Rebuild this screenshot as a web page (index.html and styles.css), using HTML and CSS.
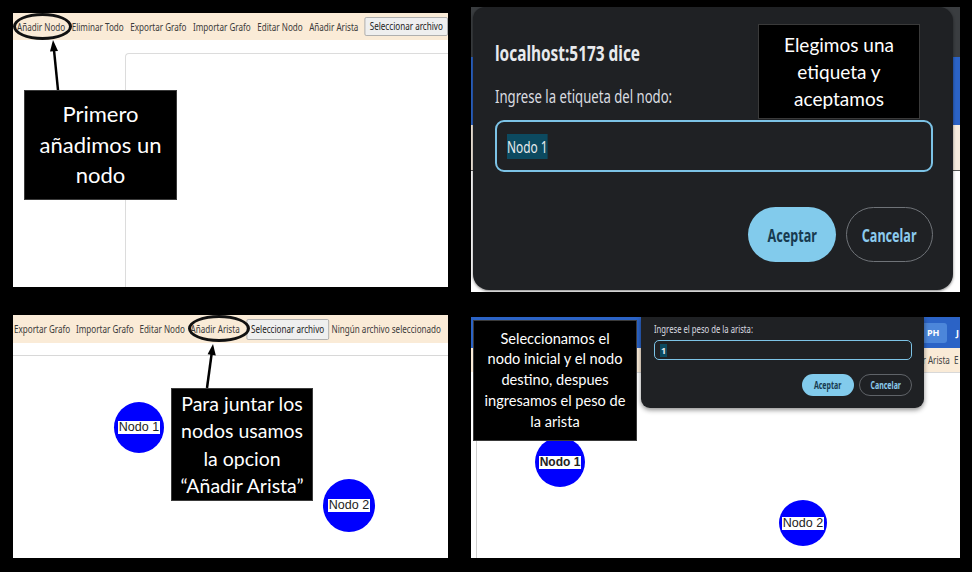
FILE: index.html
```html
<!DOCTYPE html>
<html lang="es">
<head>
<meta charset="utf-8">
<title>Tutorial grafo</title>
<link rel="stylesheet" href="styles.css">
</head>
<body>
<main class="board">

  <section class="panel p1">
    <div class="toolbar tb1">
      <div class="tb-inner">
        <span>Añadir Nodo</span>
        <span>Eliminar Todo</span>
        <span>Exportar Grafo</span>
        <span>Importar Grafo</span>
        <span>Editar Nodo</span>
        <span>Añadir Arista</span>
        <span class="filebtn">Seleccionar archivo</span>
      </div>
    </div>
    <div class="workspace"><div class="canvas-box"></div></div>
    <div class="ring ring1"></div>
    <svg class="arrow" viewBox="0 0 435 274" width="435" height="274">
      <line x1="45" y1="77" x2="41" y2="37" stroke="#000" stroke-width="2.5"/>
      <polygon points="40,27 45,38 37,38.6" fill="#000"/>
    </svg>
    <div class="note note1">Primero<br>añadimos un<br>nodo</div>
  </section>

  <section class="panel p2">
    <div class="dialog big">
      <div class="d-title"><span class="sx">localhost:5173 dice</span></div>
      <div class="d-label"><span class="sx sxl">Ingrese la etiqueta del nodo:</span></div>
      <div class="d-input"><span class="sx"><span class="sel">Nodo 1</span></span></div>
      <div class="d-actions">
        <span class="btn ok"><span class="sxc">Aceptar</span></span>
        <span class="btn cancel"><span class="sxc">Cancelar</span></span>
      </div>
    </div>
    <div class="note note2">Elegimos una<br>etiqueta y<br>aceptamos</div>
  </section>

  <section class="panel p3">
    <div class="toolbar tb3">
      <div class="tb-inner">
        <span>Exportar Grafo</span>
        <span>Importar Grafo</span>
        <span>Editar Nodo</span>
        <span>Añadir Arista</span>
        <span class="filebtn">Seleccionar archivo</span>
        <span class="nofile">Ningún archivo seleccionado</span>
      </div>
    </div>
    <div class="canvas3"></div>
    <div class="node n31"><span class="lbl">Nodo 1</span></div>
    <div class="node n32"><span class="lbl">Nodo 2</span></div>
    <div class="ring ring3"></div>
    <svg class="arrow" viewBox="0 0 435 243" width="435" height="243">
      <line x1="194" y1="73" x2="198.6" y2="39" stroke="#000" stroke-width="2.5"/>
      <polygon points="200,29 202.8,40.5 194.6,39.3" fill="#000"/>
    </svg>
    <div class="note note3">Para juntar los<br>nodos usamos<br>la opcion<br>“Añadir Arista”</div>
  </section>

  <section class="panel p4">
    <div class="p4-header">
      <span class="ph-btn">PH</span>
      <span class="hdr-j">J</span>
    </div>
    <div class="p4-toolbar">
      <span class="sx4">r Arista&nbsp;&nbsp;E</span>
    </div>
    <div class="canvas4"></div>
    <div class="node n41"><span class="lbl bold">Nodo 1</span></div>
    <div class="node n42"><span class="lbl">Nodo 2</span></div>
    <div class="dialog small">
      <div class="s-label"><span class="sx sxs">Ingrese el peso de la arista:</span></div>
      <div class="s-input"><span class="sel">1</span></div>
      <div class="s-actions">
        <span class="sbtn ok"><span class="sxc">Aceptar</span></span>
        <span class="sbtn cancel"><span class="sxc">Cancelar</span></span>
      </div>
    </div>
    <div class="note note4">Seleccionamos el<br>nodo inicial y el nodo<br>destino, despues<br>ingresamos el peso de<br>la arista</div>
  </section>

</main>
</body>
</html>
```

FILE: styles.css
```css
* { box-sizing: border-box; }
html, body { margin: 0; padding: 0; background: #000; }
body { width: 972px; height: 572px; overflow: hidden; }

.board {
  display: grid;
  grid-template-columns: 435px 489px;
  grid-template-rows: 285px 243px;
  column-gap: 23px;
  row-gap: 23px;
  padding: 7px 12px 0 13px;
}

.panel { position: relative; overflow: hidden; background: #fff; }

/* ---------- panel 1 ---------- */
.p1 { margin-top: 6px; height: 274px; display: flex; flex-direction: column; }

.toolbar {
  background: #faebd7;
  display: flex;
  align-items: center;
  flex: none;
  font-family: "Noto Sans", sans-serif;
  font-size: 10px;
  color: #3a3a3a;
}
.tb1 { height: 27px; padding-left: 4px; }
.tb3 { height: 28px; padding-left: 1px; }
.tb-inner {
  display: flex;
  align-items: center;
  gap: 8px;
  white-space: nowrap;
  transform: scaleX(0.81);
  transform-origin: left center;
}
.filebtn {
  display: inline-block;
  background: #efefef;
  border: 1px solid #a9a9a9;
  border-radius: 2px;
  padding: 2px 5px;
  color: #222;
  line-height: 13px;
}
.tb3 .filebtn { padding: 3px 5px; margin-left: 1px; }
.tb3 .tb-inner { gap: 7px; }
.nofile { margin-left: -4px; }

.workspace { flex: 1; padding: 13px 0 0 112px; }
.canvas-box {
  height: 100%;
  border-top: 1px solid #dcdcdc;
  border-left: 1px solid #dcdcdc;
  border-top-left-radius: 4px;
}

.ring {
  position: absolute;
  border: 3px solid #111;
  border-radius: 50%;
}
.ring1 { left: 0; top: 0; width: 59px; height: 27px; }
.ring3 { left: 175px; top: 0; width: 62px; height: 27px; }

.arrow { position: absolute; left: 0; top: 0; pointer-events: none; }

.note {
  position: absolute;
  background: #000;
  color: #fff;
  font-family: Lato, "Open Sans", sans-serif;
  text-align: center;
  display: flex;
  align-items: center;
  justify-content: center;
  border: 1px solid #3a3a3a;
}
.note1 { left: 11px; top: 77px; width: 153px; height: 110px; font-size: 22px; line-height: 30.5px; }
.note2 { left: 287px; top: 17px; width: 162px; height: 95px; font-size: 19px; line-height: 27px; }
.note3 { left: 158px; top: 73px; width: 142px; height: 113px; font-size: 19.5px; line-height: 27.5px; }
.note4 { left: 2px; top: 3px; width: 164px; height: 121px; font-size: 14.6px; line-height: 20.7px; }

/* ---------- panel 2 ---------- */
.p2 {
  height: 285px;
  padding: 0 7px 2px 2px;
  background: linear-gradient(#3a3d40 0 50px, #2b63c6 50px 118px, #f6ebde 118px 163px, #555 163px 164px, #fff 164px);
}
.dialog { background: #1f2124; font-family: "Noto Sans", sans-serif; }
.big {
  height: 100%;
  border-radius: 12px 14px 16px 16px;
  padding: 32px 20px 0 22px;
  box-shadow: 0 1px 3px rgba(0,0,0,.5);
}
.sx { display: inline-block; white-space: nowrap; transform: scaleX(0.7); transform-origin: left center; }
.sxl { transform: scaleX(0.73); }
.sxs { transform: scaleX(0.77); }
.sxc { display: inline-block; white-space: nowrap; transform: scaleX(0.7); transform-origin: center; }
.d-title { font-size: 22px; line-height: 26px; font-weight: 700; color: #e8eaed; height: 26px; }
.d-label { margin-top: 21px; font-size: 18px; line-height: 20px; color: #dadce0; height: 20px; }
.d-input {
  margin-top: 14px;
  height: 52px;
  border: 2px solid #7cc3e6;
  border-radius: 9px;
  display: flex;
  align-items: center;
  padding-left: 10px;
  font-size: 17px;
  color: #e8eaed;
}
.sel { background: #0c4a60; color: #e8eaed; padding: 1px 0; }
.d-actions {
  margin-top: 35px;
  display: flex;
  justify-content: flex-end;
  gap: 10px;
}
.btn {
  width: 88px;
  height: 55px;
  border-radius: 28px;
  display: flex;
  align-items: center;
  justify-content: center;
  font-size: 18px;
  font-weight: 700;
}
.btn.ok { background: #82cbec; color: #173a50; }
.btn.cancel { border: 1.5px solid #6f7378; color: #8ccbee; width: 87px; }

/* ---------- panel 3 ---------- */
.p3 { height: 243px; display: flex; flex-direction: column; }
.canvas3 { margin-top: 12px; flex: 1; border-top: 1px solid #d8d8d8; }

.node {
  position: absolute;
  border-radius: 50%;
  background: #0000ff;
  display: flex;
  align-items: center;
  justify-content: center;
}
.lbl {
  background: #fff;
  color: #222;
  font-family: "Liberation Sans", Arial, sans-serif;
  font-size: 12.5px;
  line-height: 13px;
  padding: 0 1px;
}
.lbl.bold { font-weight: 700; font-size: 12px; }
.n31 { left: 101px; top: 87px; width: 50px; height: 51px; }
.n32 { left: 310px; top: 164px; width: 52px; height: 53px; }

/* ---------- panel 4 ---------- */
.p4 { margin-top: 2px; height: 241px; display: flex; flex-direction: column; }
.p4-header {
  height: 31px;
  flex: none;
  background: #2b63c6;
  display: flex;
  align-items: center;
  justify-content: flex-end;
  padding-right: 1px;
  font-family: "Noto Sans", sans-serif;
  font-size: 9px;
  font-weight: 700;
  color: #fff;
}
.ph-btn {
  width: 28px;
  height: 20px;
  background: #4c86da;
  border-radius: 3px;
  display: flex;
  align-items: center;
  justify-content: flex-start;
  padding-left: 8px;
}
.hdr-j { margin-left: 9px; }
.p4-toolbar {
  height: 24px;
  flex: none;
  background: #faebd7;
  display: flex;
  align-items: center;
  justify-content: flex-end;
  padding-right: 1px;
  font-family: "Noto Sans", sans-serif;
  font-size: 10px;
  color: #444;
}
.sx4 { display: inline-block; white-space: nowrap; transform: scaleX(0.81); transform-origin: right center; }
.canvas4 { flex: 1; margin-left: 5px; border-top: 1px solid #d8d8d8; border-left: 1px solid #cfcfcf; }
.n41 { left: 64px; top: 120px; width: 50px; height: 50px; }
.n42 { left: 308px; top: 183px; width: 48px; height: 46px; }

.small {
  position: absolute;
  left: 170px;
  top: 0;
  width: 283px;
  height: 91px;
  border-radius: 0 0 9px 9px;
  box-shadow: 0 2px 5px rgba(0,0,0,.45);
  padding: 6px 12px 0 13px;
}
.s-label { font-size: 10px; line-height: 12px; height: 12px; color: #dadce0; }
.s-input {
  margin-top: 5px;
  height: 20px;
  border: 1.5px solid #7cc3e6;
  border-radius: 5px;
  display: flex;
  align-items: center;
  padding-left: 5px;
  font-size: 9px;
  font-weight: 700;
}
.s-input .sel { padding: 0 1px; }
.s-actions { margin-top: 14px; display: flex; justify-content: flex-end; gap: 5px; }
.sbtn {
  width: 52px;
  height: 22px;
  border-radius: 11px;
  display: flex;
  align-items: center;
  justify-content: center;
  font-size: 10px;
  font-weight: 700;
}
.sbtn.ok { background: #82cbec; color: #173a50; }
.sbtn.cancel { width: 53px; border: 1px solid #5f6368; color: #8ccbee; }
```
